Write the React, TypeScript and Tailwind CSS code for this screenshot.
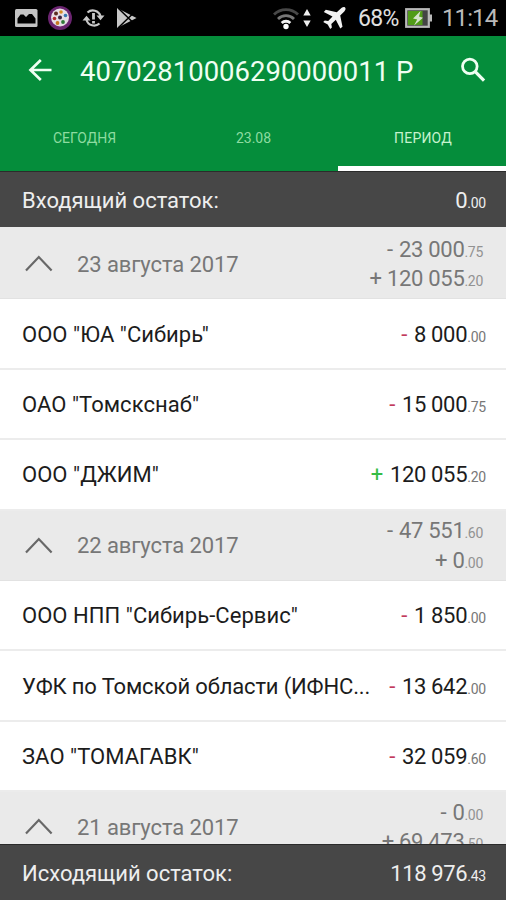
import { Fragment } from 'react';

type Operation = {
  name: string;
  sign: '-' | '+';
  amount: string;
  cents: string;
};

type Day = {
  date: string;
  expense: [string, string];
  income: [string, string];
  operations: Operation[];
};

const days: Day[] = [
  {
    date: '23 августа 2017',
    expense: ['23 000', '75'],
    income: ['120 055', '20'],
    operations: [
      { name: 'ООО "ЮА "Сибирь"', sign: '-', amount: '8 000', cents: '00' },
      { name: 'ОАО "Томскснаб"', sign: '-', amount: '15 000', cents: '75' },
      { name: 'ООО "ДЖИМ"', sign: '+', amount: '120 055', cents: '20' },
    ],
  },
  {
    date: '22 августа 2017',
    expense: ['47 551', '60'],
    income: ['0', '00'],
    operations: [
      { name: 'ООО НПП "Сибирь-Сервис"', sign: '-', amount: '1 850', cents: '00' },
      { name: 'УФК по Томской области (ИФНС...', sign: '-', amount: '13 642', cents: '00' },
      { name: 'ЗАО "ТОМАГАВК"', sign: '-', amount: '32 059', cents: '60' },
    ],
  },
  {
    date: '21 августа 2017',
    expense: ['0', '00'],
    income: ['69 473', '50'],
    operations: [],
  },
];

function StatusBar() {
  return (
    <div className="flex h-9 shrink-0 items-center bg-black pl-[15px] pr-2 text-[#c8c8c8]">
      <svg className="h-[18px] w-[23px]" viewBox="0 0 23 18">
        <rect width="22.5" height="18" rx="1.5" fill="#c4c4c4" />
        <path d="M2.500 14.500V9.500l3-4h3L11 8l3-3h3l3.500 4.500v5z" fill="#000" />
      </svg>
      <svg className="ml-[9px] h-[26px] w-[26px]" viewBox="0 0 26 26">
        <circle cx="13" cy="13" r="12" fill="#6b2470" />
        <circle cx="13" cy="12.500" r="9" fill="#e6dde4" />
        <circle cx="13" cy="12.500" r="2" fill="#3c2440" />
        <circle cx="9" cy="8.500" r="2" fill="#5c2c20" />
        <circle cx="14" cy="7" r="1.800" fill="#d58a20" />
        <circle cx="18.500" cy="10.500" r="1.800" fill="#3478b0" />
        <circle cx="7.500" cy="13.500" r="1.800" fill="#b0282c" />
        <circle cx="10.500" cy="18" r="1.900" fill="#c77820" />
        <circle cx="16" cy="17" r="1.900" fill="#307838" />
      </svg>
      <svg className="ml-[9px] h-5 w-[23px]" viewBox="0 0 23 20" fill="none" stroke="#c8c8c8" strokeWidth="2.200">
        <path d="M5.500 4.500A8 8 0 0 1 18.500 8M17.500 15.500A8 8 0 0 1 4.500 12" />
        <path d="M14.500 7.500h8l-4 4.700zM.5 12.500h8L4.500 7.800z" fill="#c8c8c8" stroke="none" />
        <path d="M11.500 5v6.500M11.500 13v2.500" strokeWidth="2.800" />
      </svg>
      <svg className="ml-[11px] h-5 w-[21px]" viewBox="0 0 21 20">
        <path d="M1 0v20L20.500 10z" fill="#c8c8c8" />
        <path d="M2 0l14 13.500M2 20L16 6.500" stroke="#000" strokeWidth="1.500" />
      </svg>
      <svg className="ml-auto h-[24px] w-[26px]" viewBox="0 0 26 24" fill="none" strokeWidth="2.800">
        <path d="M1 8.500a17 17 0 0 1 24 0" stroke="#484848" />
        <path d="M5 13a11.300 11.300 0 0 1 16 0" stroke="#777" />
        <path d="M8.700 17a6.200 6.200 0 0 1 8.600 0" stroke="#f4f4f4" />
        <circle cx="13" cy="20.500" r="2.700" fill="#fff" />
      </svg>
      <svg className="ml-1 h-[18px] w-[8px]" viewBox="0 0 8 18" fill="#eee">
        <path d="M4 0l3.700 6.500H.3zM4 18L.3 11.500h7.400z" />
      </svg>
      <svg className="ml-3 h-[22px] w-[23px]" viewBox="0 0 23 22" fill="#f2f2f2">
        <path d="M22 .5c1.300 1.300 0 3.300-1.500 4.800L17.200 8.600l2.300 11.200-2.200 1.700-4.500-8.700-4.500 4.200.6 3.400-1.700 1.500-2.500-4.400L.2 15.100l1.600-1.700 3.400.5 4.300-4.500L.8 4.900l2-2.100 11 2.400L17.300 2C18.800.6 20.800-.6 22 .5z" />
      </svg>
      <span className="ml-[12px] w-[43px] whitespace-nowrap text-[23px] leading-none tracking-[-0.7px] text-[#e0e0e0]">68%</span>
      <svg className="ml-[4px] h-[20px] w-[28px]" viewBox="0 0 28 20">
        <rect x="1.200" y="1.200" width="22.600" height="17.600" fill="#444" stroke="#b9b9b9" strokeWidth="2.200" />
        <rect x="3" y="3" width="14.500" height="14" fill="#519b18" />
        <rect x="24" y="6.500" width="3" height="7" fill="#b9b9b9" />
        <path d="M15.500 3L8 10.500l4.200 1L9 17.500l9-7.700-4-1.200z" fill="#d6e2cc" />
      </svg>
      <span className="ml-[9px] w-[56px] whitespace-nowrap text-[24px] leading-none tracking-[-0.9px] text-[#bababa]">11:14</span>
    </div>
  );
}

function Header() {
  return (
    <header className="shrink-0 bg-[#058d3b] text-[#effff2]">
      <div className="flex h-[69px] items-center pl-[28px] pr-[20px]">
        <svg className="mb-[2px] h-[22px] w-[24px]" viewBox="0 0 24 22" fill="none" stroke="currentColor" strokeWidth="2.700">
          <path d="M12.800 1L2.500 11l10.300 10M2.500 11H23.500" />
        </svg>
        <h1 className="ml-[28px] whitespace-nowrap pt-[3px] text-[27.500px] leading-none">40702810006290000011 Р</h1>
        <svg className="mb-[3px] ml-auto h-[25px] w-[26px] shrink-0" viewBox="0 0 26 26" fill="none" stroke="currentColor" strokeWidth="2.900">
          <circle cx="9.700" cy="9.700" r="7.600" />
          <path d="M15.300 15.300L24.500 24.500" strokeWidth="3.400" />
        </svg>
      </div>
      <nav className="grid h-[66px] grid-cols-[169px_169px_168px] text-center text-[14px] leading-[66px]">
        <span className="h-[66px] text-[#8ddca0]">СЕГОДНЯ</span>
        <span className="h-[66px] text-[#8ddca0]">23.08</span>
        <span className="h-[66px] border-b-[5px] border-white pl-[2px] tracking-[0.2px] text-[#c5f3ce]">ПЕРИОД</span>
      </nav>
    </header>
  );
}

function Balance({ label, amount, cents }: { label: string; amount: string; cents: string }) {
  return (
    <div className="flex h-14 shrink-0 items-center justify-between border-t border-[#2b2b2b] bg-[#474747] pl-[22px] pr-5 pt-[2px] text-[22px] text-[#eee]">
      <span>{label}</span>
      <span className="tracking-[-0.4px]">
        {amount}
        <span className="text-[14px] leading-none tracking-[-0.2px]">.{cents}</span>
      </span>
    </div>
  );
}

function DayHeader({ day }: { day: Day }) {
  return (
    <div className="flex h-[70.4px] shrink-0 items-center border-b border-[#e2e2e2] bg-[#eaeaea] pl-[25px] pr-[23px] text-[22px] text-[#777]">
      <svg className="h-[17px] w-[28px]" viewBox="0 0 28 17" fill="none" stroke="#686868" strokeWidth="2.200">
        <path d="M1 15.500L13.800 2 26.600 15.500" />
      </svg>
      <span className="ml-6 pt-px tracking-[-0.1px]">{day.date}</span>
      <div className="ml-auto pt-px text-right leading-[29.500px] tracking-[-0.3px]">
        <div>
          <span className="mr-px">-</span> {day.expense[0]}
          <span className="text-[14px] leading-none text-[#929292]">.{day.expense[1]}</span>
        </div>
        <div>
          + {day.income[0]}
          <span className="text-[14px] leading-none text-[#929292]">.{day.income[1]}</span>
        </div>
      </div>
    </div>
  );
}

function OperationRow({ operation }: { operation: Operation }) {
  const { name, sign, amount, cents } = operation;
  return (
    <div className="flex h-[70.4px] shrink-0 items-center justify-between border-b-2 border-[#ececec] bg-white pl-[22px] pr-5 pt-px text-[22px] text-[#1c1c1c]">
      <span className={name.length > 25 ? 'whitespace-nowrap tracking-[-0.15px]' : 'whitespace-nowrap tracking-[0.05px]'}>{name}</span>
      <span className="whitespace-nowrap tracking-[-0.35px]">
        <span className={sign === '+' ? 'mr-[2px] text-[#35bd45]' : 'mr-[2px] text-[#c23a5c]'}>{sign}</span> {amount}
        <span className="text-[14px] leading-none tracking-[-0.2px] text-[#777]">.{cents}</span>
      </span>
    </div>
  );
}

export default function App() {
  return (
    <div className="flex h-[900px] w-[506px] flex-col overflow-hidden bg-white font-['Roboto',sans-serif]">
      <StatusBar />
      <Header />
      <Balance label="Входящий остаток:" amount="0" cents="00" />
      <main className="flex min-h-0 flex-1 flex-col overflow-hidden bg-[#eaeaea] pt-[2px]">
        {days.map((day) => (
          <Fragment key={day.date}>
            <DayHeader day={day} />
            {day.operations.map((operation) => (
              <OperationRow key={operation.name} operation={operation} />
            ))}
          </Fragment>
        ))}
      </main>
      <Balance label="Исходящий остаток:" amount="118 976" cents="43" />
    </div>
  );
}
